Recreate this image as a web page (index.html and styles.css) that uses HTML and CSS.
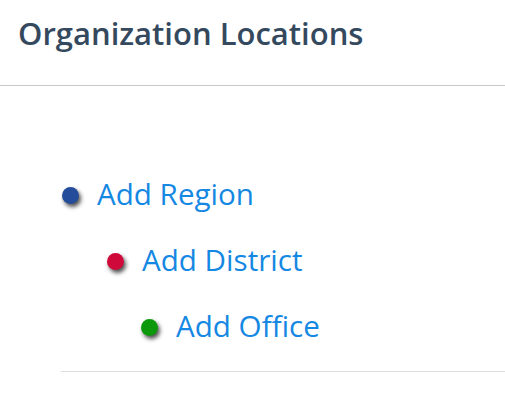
FILE: index.html
```html
<!DOCTYPE html>
<html>
<head>
<meta charset="utf-8">
<link rel="stylesheet" href="styles.css">
</head>
<body>
<div class="header">
  <h1 class="title">Organization Locations</h1>
</div>
<div class="content">
  <ul class="tree">
    <li class="node level-1"><span class="dot dot-region"></span><a class="link" href="#">Add Region</a></li>
    <li class="node level-2"><span class="dot dot-district"></span><a class="link" href="#">Add District</a></li>
    <li class="node level-3"><span class="dot dot-office"></span><a class="link" href="#">Add Office</a></li>
  </ul>
  <div class="divider"></div>
</div>
</body>
</html>
```

FILE: styles.css
```css
html, body {
  margin: 0;
  padding: 0;
  background: #ffffff;
}
body {
  font-family: "Open Sans", "Noto Sans", sans-serif;
  width: 505px;
  overflow: hidden;
}
.header {
  height: 85px;
  border-bottom: 1px solid #c8c8c8;
  display: flex;
  align-items: center;
  padding: 0 0 0 18px;
  box-sizing: content-box;
}
.title {
  margin: 0;
  margin-top: -20px;
  font-size: 31px;
  font-weight: 600;
  color: #34495e;
  letter-spacing: 0;
}
.content {
  padding: 76px 0 0 61px;
}
.tree {
  list-style: none;
  margin: 0;
  padding: 0;
}
.node {
  height: 66px;
  display: flex;
  align-items: center;
}
.level-1 { padding-left: 1px; }
.level-2 { padding-left: 46px; }
.level-3 { padding-left: 80px; }
.dot {
  width: 17px;
  height: 17px;
  border-radius: 50%;
  box-shadow: 2px 3px 4px rgba(0,0,0,0.7);
  margin-right: 18px;
  flex: none;
}
.dot-region { background: #234d9a; }
.dot-district { background: #cf0a3b; }
.dot-office { background: #0b990b; }
.link {
  font-size: 29.6px;
  color: #1588e3;
  text-decoration: none;
  line-height: 1;
  margin-top: -3px;
}
.divider {
  margin-top: 11px;
  border-top: 1px solid #dddddd;
  width: 450px;
}
```
